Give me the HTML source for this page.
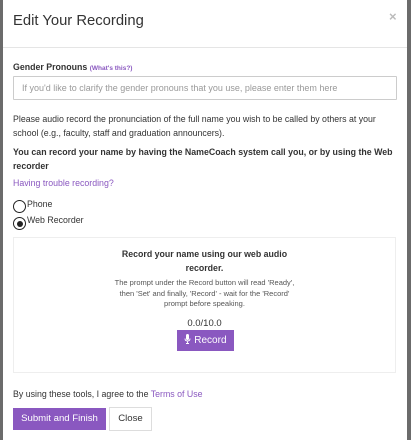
<!DOCTYPE html>
<html><head><meta charset="utf-8"><style>
body{margin:0;width:411px;height:428px;overflow:hidden;background:#6b6b6b;font-family:"Liberation Sans",sans-serif;color:#333;position:relative}
.m{position:absolute;left:3px;top:0;width:404px;height:440px;background:#fff}
.a{position:absolute;white-space:nowrap}
.hdr{position:absolute;left:0;top:47px;width:404px;border-top:1px solid #e5e5e5}
.p{font-size:8.8px;color:#333}
.b{font-weight:bold}
.pu{color:#8a58c0}
</style></head><body>
<div class="m">
<div class="a" style="left:10px;top:13px;font-size:14.8px;color:#333">Edit Your Recording</div>
<div class="a" style="left:386px;top:9px;font-size:13px;color:#bbb;font-weight:bold">×</div>
<div class="hdr"></div>
<div class="a p b" style="left:10px;top:62px">Gender Pronouns <span class="pu" style="font-size:6.5px">(What's this?)</span></div>
<div class="a" style="left:10px;top:76px;width:382px;height:22px;border:1px solid #ccc;border-radius:1px"></div>
<div class="a" style="left:19px;top:83px;font-size:9px;color:#999">If you'd like to clarify the gender pronouns that you use, please enter them here</div>
<div class="a p" style="left:10px;top:112px;line-height:14px">Please audio record the pronunciation of the full name you wish to be called by others at your<br>school (e.g., faculty, staff and graduation announcers).</div>
<div class="a p b" style="left:10px;top:145px;line-height:14px">You can record your name by having the NameCoach system call you, or by using the Web<br>recorder</div>
<div class="a pu" style="left:10px;top:178px;font-size:8.8px">Having trouble recording?</div>
<div class="a" style="left:10px;top:200px;width:11px;height:11px;border:1.3px solid #222;border-radius:50%"></div>
<div class="a p" style="left:24px;top:199px">Phone</div>
<div class="a" style="left:10px;top:217px;width:11px;height:11px;border:1.3px solid #222;border-radius:50%"></div>
<div class="a" style="left:13.5px;top:220.5px;width:6.5px;height:6.5px;background:#222;border-radius:50%"></div>
<div class="a p" style="left:24px;top:215px">Web Recorder</div>
<div class="a" style="left:10px;top:237px;width:381px;height:134px;border:1px solid #eee"></div>
<div class="a p b" style="left:10px;width:383px;text-align:center;top:247px;line-height:14px">Record your name using our web audio<br>recorder.</div>
<div class="a" style="left:10px;width:383px;text-align:center;top:278px;font-size:7.5px;line-height:10.5px;color:#555">The prompt under the Record button will read 'Ready',<br>then 'Set' and finally, 'Record' - wait for the 'Record'<br>prompt before speaking.</div>
<div class="a" style="left:10px;width:383px;text-align:center;top:318px;font-size:9.5px;color:#333">0.0/10.0</div>
<div class="a" style="left:174px;top:330px;width:57px;height:21px;background:#8a58c0;color:#fff;font-size:10px;line-height:21px;text-align:center"><svg width="7" height="10" viewBox="0 0 7 10" style="vertical-align:-1px"><rect x="2" y="0" width="3" height="6" rx="1.5" fill="#fff"/><path d="M1 4.5q0 2.5 2.5 2.5T6 4.5M3.5 7v2M2 9.5h3" stroke="#fff" fill="none" stroke-width="0.9"/></svg> Record</div>
<div class="a p" style="left:10px;top:389px">By using these tools, I agree to the <span class="pu">Terms of Use</span></div>
<div class="a" style="left:10px;top:408px;width:93px;height:22px;background:#8a58c0;color:#fff;font-size:9.6px;line-height:21px;text-align:center">Submit and Finish</div>
<div class="a" style="left:106px;top:407px;width:41px;height:22px;border:1px solid #ddd;color:#333;font-size:9.6px;line-height:22px;text-align:center">Close</div>
</div>
</body></html>
